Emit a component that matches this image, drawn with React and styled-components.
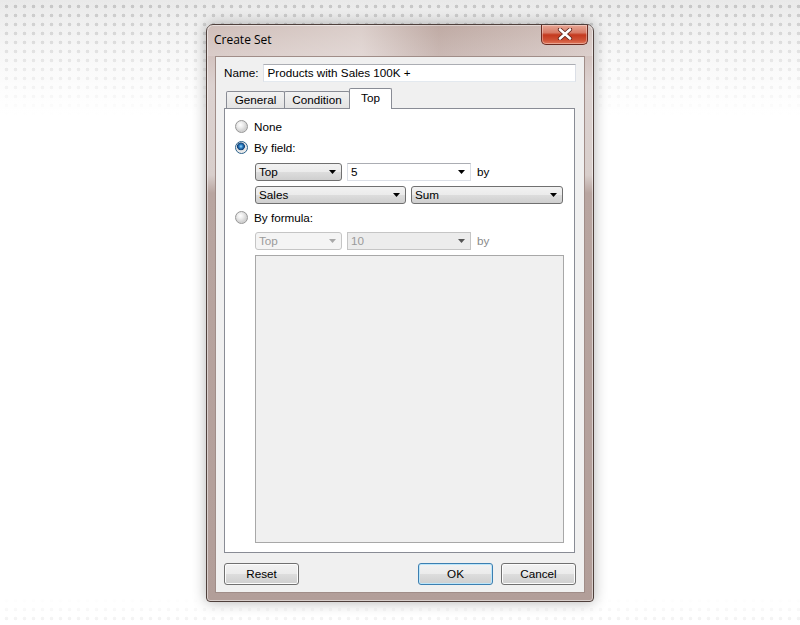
import React from 'react';
import styled, { createGlobalStyle } from 'styled-components';

const GlobalStyle = createGlobalStyle`
  html, body { margin: 0; padding: 0; }
  body {
    font-family: "Liberation Sans", Arial, sans-serif;
    font-size: 11.7px;
    color: #000;
  }
`;

const Page = styled.div`
  width: 800px;
  height: 625px;
  display: flex;
  align-items: center;
  justify-content: center;
  background:
    linear-gradient(to bottom, rgba(255,255,255,0) 0px, rgba(255,255,255,0.55) 55px, #fff 115px, #fff 598px, rgba(255,255,255,0.75) 625px),
    radial-gradient(circle, #c4c4c4 0 1.5px, transparent 2.1px) 2px 2px / 9px 9px,
    linear-gradient(#e9e9e9, #fff 220px);
`;

const Window = styled.div`
  width: 388px;
  height: 578px;
  box-sizing: border-box;
  display: flex;
  flex-direction: column;
  border: 1px solid #4f403c;
  border-radius: 7px 7px 4px 4px;
  background: linear-gradient(to bottom, #c7b3ad 0, #d3c3bf 30px, #dcd2d0 60px, #d8cecb 150px, #b8a5a0 168px, #b29e99 100%);
  box-shadow: 0 0 14px rgba(0,0,0,0.3), inset 0 0 0 1px rgba(255,255,255,0.5);
`;

const TitleBar = styled.div`
  height: 31px;
  display: flex;
  align-items: flex-start;
  justify-content: space-between;
  padding-left: 7px;
  background: linear-gradient(to right, rgba(255,255,255,0.15), rgba(255,255,255,0.35) 40%, rgba(120,90,80,0.1) 60%, rgba(255,255,255,0.2));
`;

const Title = styled.span`
  margin-top: 7px;
  font-family: "Open Sans", "Liberation Sans", sans-serif;
  font-size: 12px;
  line-height: 16px;
  color: #000;
`;

const CloseButton = styled.div`
  width: 47px;
  height: 20px;
  box-sizing: border-box;
  margin-right: 5px;
  display: flex;
  align-items: center;
  justify-content: center;
  border: 1px solid #6b2a20;
  border-top: none;
  border-radius: 0 0 5px 5px;
  background: linear-gradient(to bottom, #e7a695 0, #d77b66 40%, #c4391e 52%, #cf5236 80%, #e0785c 100%);
  box-shadow: inset 0 0 0 1px rgba(255,255,255,0.35);
`;

const Client = styled.div`
  flex: 1;
  margin: 0 8px 8px;
  display: flex;
  flex-direction: column;
  background: #f0f0f0;
  border: 1px solid #a08d88;
  padding: 7px 8px 7px 8px;
`;

const NameRow = styled.div`
  display: flex;
  align-items: center;
  gap: 5px;
`;

const TextBox = styled.div`
  flex: 1;
  height: 18px;
  box-sizing: border-box;
  display: flex;
  align-items: center;
  padding-left: 3px;
  background: #fff;
  border: 1px solid #dbdfe6;
  border-top-color: #abadb3;
  border-bottom-color: #e3e9ef;
`;

const TabStrip = styled.div`
  display: flex;
  align-items: flex-end;
  height: 20px;
  margin-top: 6px;
  padding-left: 2px;
`;

const Tab = styled.div`
  width: ${p => p.$w}px;
  height: ${p => (p.$active ? 21 : 17)}px;
  box-sizing: border-box;
  display: flex;
  align-items: center;
  justify-content: center;
  margin-right: -1px;
  margin-bottom: ${p => (p.$active ? -1 : 0)}px;
  padding-bottom: ${p => (p.$active ? 2 : 0)}px;
  border: 1px solid #898c95;
  border-bottom: none;
  border-radius: 2px 2px 0 0;
  background: ${p => (p.$active ? '#fff' : 'linear-gradient(#f2f2f2, #e3e3e3)')};
  position: relative;
  z-index: ${p => (p.$active ? 1 : 0)};
`;

const Panel = styled.div`
  flex: 1;
  display: flex;
  flex-direction: column;
  margin-right: 1px;
  background: #fff;
  border: 1px solid #898c95;
  padding: 11px 10px 9px 10px;
`;

const RadioRow = styled.div`
  display: flex;
  align-items: center;
  gap: 6px;
  height: 14px;
  margin-top: ${p => p.$mt || 0}px;
`;

const Radio = styled.span`
  width: 13px;
  height: 13px;
  box-sizing: border-box;
  border-radius: 50%;
  border: 1px solid ${p => (p.$checked ? '#2c628b' : '#979797')};
  background: ${p => p.$checked
    ? 'radial-gradient(circle at 45% 40%, #9fdcff 0, #2b7fc4 1.8px, #123f74 3.6px, #e4e4e4 4.2px, #f7f7f7 100%)'
    : 'radial-gradient(circle at 40% 35%, #ffffff 0, #ececec 3px, #d2d2d2 6px)'};
`;

const Indent = styled.div`
  display: flex;
  flex-direction: column;
  gap: 5px;
  margin-left: 20px;
  margin-top: ${p => p.$mt || 0}px;
`;

const ComboRow = styled.div`
  display: flex;
  align-items: center;
  gap: 5px;
`;

const Combo = styled.div`
  width: ${p => p.$w}px;
  height: 18px;
  box-sizing: border-box;
  display: flex;
  align-items: center;
  justify-content: space-between;
  padding: 0 5px 0 3px;
  border-radius: ${p => (p.$edit ? 0 : 3)}px;
  color: ${p => (p.$disabled ? '#9a9a9a' : '#000')};
  border: 1px solid ${p => (p.$disabled ? '#c5c5c5' : p.$edit ? '#dbdfe6' : '#707070')};
  border-top-color: ${p => (p.$edit && !p.$disabled ? '#abadb3' : undefined)};
  background: ${p => {
    if (p.$disabled) return p.$edit ? '#ececec' : '#f4f4f4';
    if (p.$edit) return '#fff';
    return 'linear-gradient(#f2f2f2 0, #ebebeb 50%, #dddddd 50%, #cfcfcf 100%)';
  }};
`;

const ByLabel = styled.span`
  margin-left: 1px;
  color: ${p => (p.$disabled ? '#8a8a8a' : '#000')};
`;

const FormulaBox = styled.div`
  flex: 1;
  margin: 5px 0 0 20px;
  background: #f0f0f0;
  border: 1px solid #a8a8a8;
`;

const Footer = styled.div`
  display: flex;
  align-items: center;
  gap: 8px;
  margin-top: 10px;
`;

const Spacer = styled.div`
  flex: 1;
`;

const Button = styled.div`
  width: 75px;
  height: 22px;
  box-sizing: border-box;
  display: flex;
  align-items: center;
  justify-content: center;
  border-radius: 3px;
  border: 1px solid ${p => (p.$primary ? '#3c7fb1' : '#707070')};
  background: linear-gradient(#f2f2f2 0, #ebebeb 50%, #dddddd 50%, #cfcfcf 100%);
  box-shadow: inset 0 0 0 1px ${p => (p.$primary ? '#bde6fa' : '#fcfcfc')};
`;

const Arrow = ({ color = '#000' }) => (
  <svg width="7" height="4" viewBox="0 0 7 4">
    <path d="M0 0h7L3.5 4z" fill={color} />
  </svg>
);

const CloseX = () => (
  <svg width="16" height="12" viewBox="0 0 16 12">
    <path d="M3 1.5L13 10.5M13 1.5L3 10.5" stroke="#5c2118" strokeWidth="4.2" strokeLinecap="round" />
    <path d="M3 1.5L13 10.5M13 1.5L3 10.5" stroke="#fff" strokeWidth="2.6" strokeLinecap="round" />
  </svg>
);

const App = () => {
  return (
    <>
      <GlobalStyle />
      <Page>
        <Window>
          <TitleBar>
            <Title>Create Set</Title>
            <CloseButton><CloseX /></CloseButton>
          </TitleBar>
          <Client>
            <NameRow>
              <span>Name:</span>
              <TextBox>Products with Sales 100K +</TextBox>
            </NameRow>
            <TabStrip>
              <Tab $w={59}>General</Tab>
              <Tab $w={66}>Condition</Tab>
              <Tab $w={43} $active>Top</Tab>
            </TabStrip>
            <Panel>
              <RadioRow>
                <Radio />
                <span>None</span>
              </RadioRow>
              <RadioRow $mt={7}>
                <Radio $checked />
                <span>By field:</span>
              </RadioRow>
              <Indent $mt={8}>
                <ComboRow>
                  <Combo $w={87}>Top<Arrow /></Combo>
                  <Combo $w={124} $edit>5<Arrow /></Combo>
                  <ByLabel>by</ByLabel>
                </ComboRow>
                <ComboRow>
                  <Combo $w={151}>Sales<Arrow /></Combo>
                  <Combo $w={152}>Sum<Arrow /></Combo>
                </ComboRow>
              </Indent>
              <RadioRow $mt={7}>
                <Radio />
                <span>By formula:</span>
              </RadioRow>
              <Indent $mt={7}>
                <ComboRow>
                  <Combo $w={87} $disabled>Top<Arrow color="#a8a8a8" /></Combo>
                  <Combo $w={124} $edit $disabled>10<Arrow color="#555" /></Combo>
                  <ByLabel $disabled>by</ByLabel>
                </ComboRow>
              </Indent>
              <FormulaBox />
            </Panel>
            <Footer>
              <Button>Reset</Button>
              <Spacer />
              <Button $primary>OK</Button>
              <Button>Cancel</Button>
            </Footer>
          </Client>
        </Window>
      </Page>
    </>
  );
};

export default App;
